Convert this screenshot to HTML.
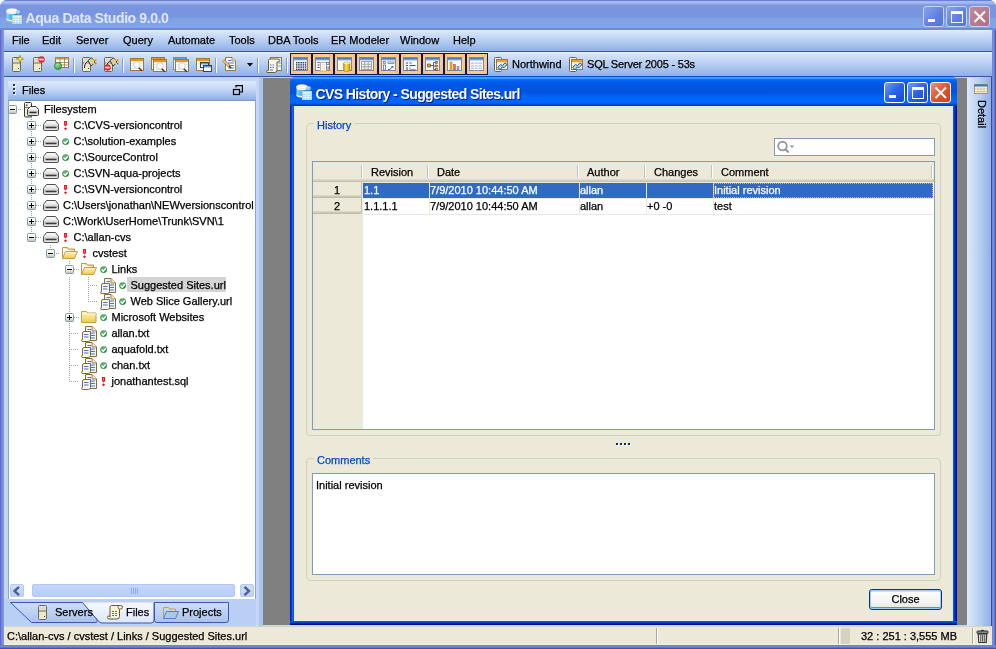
<!DOCTYPE html><html><head><meta charset="utf-8"><style>
*{margin:0;padding:0;box-sizing:border-box}
html,body{width:996px;height:649px;overflow:hidden;background:#fff}
body{font-family:"Liberation Sans",sans-serif;font-size:11px;color:#000;position:relative;-webkit-text-stroke:0.25px currentColor}
.a{position:absolute}
.tx{position:absolute;white-space:nowrap;line-height:16px;font-size:11px}
svg{position:absolute;overflow:visible}
#win{will-change:transform;left:0;top:0;width:996px;height:649px;background:#6e81d9;border-radius:7px 7px 0 0;overflow:hidden}
#title{left:0;top:0;width:996px;height:30px;background:linear-gradient(#6a80d8 0,#6a80d8 1px,#a6baec 1px,#a6baec 3px,#7e98e0 5px,#7a94df 8px,#7a95df 17px,#80a3e8 19px,#80a4e8 27.5px,#7088d8 28px,#7088d8 30px)}
#title .t{-webkit-text-stroke:0;left:25.5px;top:9.5px;font-size:14px;letter-spacing:-0.4px;font-weight:bold;color:#dfe6f8;line-height:16px;white-space:nowrap}
#menu{left:4px;top:30px;width:988px;height:22px;background:linear-gradient(#e6effc 0,#d6e4f9 2px,#b8cef1 50%,#8eb0e6 100%);border-bottom:1px solid #3d52a8}
#menu span{position:absolute;top:2px;line-height:16px}
#tool{left:4px;top:52px;width:988px;height:25px;background:linear-gradient(#e6effc 0,#d6e4f9 2px,#b8cef1 50%,#8eb0e6 100%);border-bottom:1px solid #3d52a8}
#main{left:4px;top:77px;width:988px;height:549px;background:#c4d6f6}
#gray{left:263px;top:78px;width:704px;height:547px;background:#808080}
#status{left:4px;top:626px;width:988px;height:19px;background:#ece9d8;border-top:1px solid #d6d2c6;border-bottom:1px solid #f4f0dc}
#lp{left:8px;top:100px;width:248px;height:500px;background:#fff;border:1px solid #8aa6c8;border-top-color:#7a9ac4}
#lph{left:8px;top:81px;width:248px;height:19px;background:linear-gradient(#dde9fb,#c6d8f6 40%,#8db0e6)}
#detail{left:967px;top:77px;width:24px;height:549px;background:linear-gradient(90deg,#dde9fb,#b9d0f3 50%,#8fb0e6)}
#dlg{left:290px;top:76px;width:667px;height:549px;background:#0a48e0;border-radius:7px 7px 0 0}
#dtitle{left:0;top:0;width:667px;height:30px;border-radius:7px 7px 0 0;background:linear-gradient(#0050e0 0,#0050e0 1px,#40a0ff 1px,#3898ff 3px,#0070ff 3px,#0070ff 4px,#0060f0 5px,#0056e2 9px,#0054e0 15px,#0058e8 18px,#0064fa 21px,#0066ff 27px,#0050e0 28px,#0040c8 29px,#0038c0 30px)}
#dclient{left:4px;top:30px;width:659px;height:515px;background:#ece9d8}
.grp{position:absolute;border:1px solid #d0d0bf;border-radius:4px}
.glab{position:absolute;background:#ece9d8;color:#0046d5;padding:0 3px;line-height:14px;margin-top:1px}
.dots{position:absolute;width:2px;height:2px;background:#0a246a;box-shadow:1px 1px 0 #fff}
</style></head><body><div id="win" class="a"><div id="title" class="a"><div class="t a">Aqua Data Studio 9.0.0</div></div><svg style="left:6px;top:8px" width="17" height="18" viewBox="0 0 17 18">
<defs><linearGradient id="dbg" x1="0" y1="0" x2="1" y2="0"><stop offset="0" stop-color="#8cd4f8"/><stop offset="0.5" stop-color="#3ab0f0"/><stop offset="1" stop-color="#2088d8"/></linearGradient>
<radialGradient id="sph" cx="0.35" cy="0.35" r="0.7"><stop offset="0" stop-color="#d0ecff"/><stop offset="1" stop-color="#3a8ad8"/></radialGradient></defs>
<path d="M0.5 2.5v9c0 1.1 2.5 2 5.5 2s5.5-0.9 5.5-2v-9z" fill="url(#dbg)"/>
<path d="M0.5 10v1.5c0 1.1 2.5 2 5.5 2s5.5-0.9 5.5-2V10c0 1.1-2.5 2-5.5 2s-5.5-0.9-5.5-2z" fill="#f4f0ea"/>
<path d="M0.5 2.5v1.8c0 1.1 2.5 2 5.5 2s5.5-0.9 5.5-2V2.5z" fill="#f8f6f0"/>
<ellipse cx="6" cy="2.5" rx="5.5" ry="2" fill="#fbfaf6" stroke="#e0d8d0" stroke-width="0.5"/>
<circle cx="12.8" cy="4.6" r="2.5" fill="url(#sph)"/>
<rect x="6.5" y="7.5" width="9" height="8" fill="#a8daf6" stroke="#d8ccb4" stroke-width="1"/>
<rect x="7" y="8" width="8" height="1.5" fill="#e8f4fc"/>
<path d="M7 11.5h8M7 13.5h8M9.7 9.5v6M12.3 9.5v6" stroke="#e6f6ff" stroke-width="0.8"/>
</svg><div class="a" style="left:923px;top:6px;width:21px;height:21px;border:1px solid #c9d3f2;border-radius:3px;background:linear-gradient(135deg,#8aa4ec,#5f7ee0 60%,#5675dc)"><div class="a" style="left:4px;top:12px;width:7px;height:3px;background:#fff"></div></div><div class="a" style="left:946px;top:6px;width:21px;height:21px;border:1px solid #c9d3f2;border-radius:3px;background:linear-gradient(135deg,#8aa4ec,#5f7ee0 60%,#5675dc)"><div class="a" style="left:4px;top:4px;width:12px;height:12px;border:1px solid #fff;border-top-width:3px"></div></div><div class="a" style="left:969px;top:6px;width:21px;height:21px;border:1px solid #c9d3f2;border-radius:3px;background:linear-gradient(135deg,#c08a9a,#ad6f82)"><svg style="left:0;top:0" width="19" height="19"><path d="M4.5 4.5L15 15M15 4.5L4.5 15" stroke="#fff" stroke-width="2"/></svg></div><div id="menu" class="a"><span style="left:8px">File</span><span style="left:38px">Edit</span><span style="left:72px">Server</span><span style="left:119px">Query</span><span style="left:164px">Automate</span><span style="left:225px">Tools</span><span style="left:264px">DBA Tools</span><span style="left:327px">ER Modeler</span><span style="left:396px">Window</span><span style="left:449px">Help</span></div><div id="tool" class="a"></div><svg style="left:12px;top:57px" width="9" height="15"><rect x="0.5" y="0.5" width="8" height="14" rx="1" fill="#ece8c8" stroke="#6a6a5a"/><rect x="1.5" y="1.5" width="6" height="3" fill="#d8d8d8"/><path d="M1 6h7" stroke="#6a6a5a"/><rect x="6" y="11" width="1" height="1" fill="#444"/></svg><svg style="left:16px;top:55px" width="8" height="8"><path d="M4 0.3L5 3L7.7 4L5 5L4 7.7L3 5L0.3 4L3 3z" fill="#ffe040" stroke="#a07800" stroke-width="0.6"/></svg><svg style="left:33px;top:57px" width="9" height="15"><rect x="0.5" y="0.5" width="8" height="14" rx="1" fill="#ece8c8" stroke="#6a6a5a"/><rect x="1.5" y="1.5" width="6" height="3" fill="#d8d8d8"/><path d="M1 6h7" stroke="#6a6a5a"/><rect x="6" y="11" width="1" height="1" fill="#444"/></svg><svg style="left:38px;top:56px" width="7.0" height="7.0"><circle cx="3.5" cy="3.5" r="3.2" fill="#e8242c"/><rect x="1.2999999999999998" y="2.7" width="4.4" height="1.6" fill="#fff"/></svg><svg style="left:55px;top:57px" width="14" height="11"><rect x="0.5" y="0.5" width="13" height="10" fill="#fff" stroke="#9a7838"/><rect x="0.5" y="0.5" width="13" height="2" fill="#c89850"/><path d="M0 5.5h14M0 8h14M5 0v11M9.5 0v11" stroke="#9a7838" stroke-width="0.8"/></svg><svg style="left:54px;top:62px" width="9" height="9"><defs><radialGradient id="gcg" cx="0.4" cy="0.3" r="0.7"><stop offset="0" stop-color="#a8e0a0"/><stop offset="1" stop-color="#30a040"/></radialGradient></defs><circle cx="4" cy="4" r="3.6" fill="url(#gcg)" stroke="#2a8a30" stroke-width="0.8"/></svg><div class="a" style="left:73px;top:58px;width:1px;height:15px;background:#7f9bd8;box-shadow:1px 0 0 #fff"></div><svg style="left:82px;top:57px" width="9" height="15"><rect x="0.5" y="0.5" width="8" height="14" rx="1" fill="#ece8c8" stroke="#6a6a5a"/><rect x="1.5" y="1.5" width="6" height="3" fill="#d8d8d8"/><path d="M1 6h7" stroke="#6a6a5a"/><rect x="6" y="11" width="1" height="1" fill="#444"/></svg><svg style="left:82px;top:57px" width="15" height="12"><path d="M2.5 11C2.5 7 3.5 5 6.5 4.5" stroke="#f8f8f0" stroke-width="2.6" fill="none"/><path d="M2.5 11C2.5 7 3.5 5 6.5 4.5" stroke="#202020" stroke-width="1.1" fill="none"/><path d="M6 3.5L9.5 0.8L12.5 4L12.5 6L9 9z" fill="#d8d2a8" stroke="#303030" stroke-width="0.9"/><path d="M10.5 3.2h3.5M10.5 6.5h3.5" stroke="#ffd000" stroke-width="1.3"/><path d="M13 3.2h1.5M13 6.5h1.5" stroke="#e86000" stroke-width="1.3"/></svg><svg style="left:104px;top:57px" width="9" height="15"><rect x="0.5" y="0.5" width="8" height="14" rx="1" fill="#ece8c8" stroke="#6a6a5a"/><rect x="1.5" y="1.5" width="6" height="3" fill="#d8d8d8"/><path d="M1 6h7" stroke="#6a6a5a"/><rect x="6" y="11" width="1" height="1" fill="#444"/></svg><svg style="left:104px;top:57px" width="15" height="12"><path d="M2.5 11C2.5 7 3.5 5 6.5 4.5" stroke="#f8f8f0" stroke-width="2.6" fill="none"/><path d="M2.5 11C2.5 7 3.5 5 6.5 4.5" stroke="#202020" stroke-width="1.1" fill="none"/><path d="M6 3.5L9.5 0.8L12.5 4L12.5 6L9 9z" fill="#d8d2a8" stroke="#303030" stroke-width="0.9"/><path d="M10.5 3.2h3.5M10.5 6.5h3.5" stroke="#ffd000" stroke-width="1.3"/><path d="M13 3.2h1.5M13 6.5h1.5" stroke="#e86000" stroke-width="1.3"/></svg><svg style="left:104px;top:64px" width="7.0" height="7.0"><circle cx="3.5" cy="3.5" r="3.2" fill="#e8242c"/><rect x="1.2999999999999998" y="2.7" width="4.4" height="1.6" fill="#fff"/></svg><div class="a" style="left:122px;top:58px;width:1px;height:15px;background:#7f9bd8;box-shadow:1px 0 0 #fff"></div><svg style="left:130px;top:58px" width="14" height="13"><rect x="0.5" y="0.5" width="13" height="12" fill="#fff" stroke="#9a7838"/><rect x="1" y="1" width="12" height="2.2" fill="#f09020"/><path d="M1 5.5h12M1 8h12M1 10.5h12" stroke="#d8f0f8" stroke-width="1.2"/><path d="M4 3v9" stroke="#e0e0d0" stroke-width="0.8"/></svg><svg style="left:133px;top:61px" width="10" height="10"><circle cx="4" cy="4" r="3.3" fill="#f8f8f8" stroke="#c8c8c0" stroke-width="0.8"/><path d="M5.8 6.8l3 3" stroke="#702818" stroke-width="1.5"/></svg><svg style="left:151px;top:57px" width="14" height="13"><rect x="0.5" y="0.5" width="13" height="12" fill="#fff" stroke="#9a7838"/><rect x="1" y="1" width="12" height="2.2" fill="#f09020"/><path d="M1 5.5h12M1 8h12M1 10.5h12" stroke="#d8f0f8" stroke-width="1.2"/><path d="M4 3v9" stroke="#e0e0d0" stroke-width="0.8"/></svg><svg style="left:153px;top:59px" width="14" height="13"><rect x="0.5" y="0.5" width="13" height="12" fill="#fff" stroke="#9a7838"/><rect x="1" y="1" width="12" height="2.2" fill="#f09020"/><path d="M1 5.5h12M1 8h12M1 10.5h12" stroke="#d8f0f8" stroke-width="1.2"/><path d="M4 3v9" stroke="#e0e0d0" stroke-width="0.8"/></svg><svg style="left:156px;top:62px" width="10" height="10"><circle cx="4" cy="4" r="3.3" fill="#f8f8f8" stroke="#c8c8c0" stroke-width="0.8"/><path d="M5.8 6.8l3 3" stroke="#702818" stroke-width="1.5"/></svg><svg style="left:173px;top:57px" width="14" height="13"><rect x="0.5" y="0.5" width="13" height="12" fill="#fff" stroke="#7890a8"/><rect x="1" y="1" width="12" height="2.2" fill="#58a0e0"/><path d="M1 5.5h12M1 8h12M1 10.5h12" stroke="#d8f0f8" stroke-width="1.2"/><path d="M4 3v9" stroke="#e0e0d0" stroke-width="0.8"/></svg><svg style="left:175px;top:59px" width="14" height="13"><rect x="0.5" y="0.5" width="13" height="12" fill="#fff" stroke="#9a7838"/><rect x="1" y="1" width="12" height="2.2" fill="#f09020"/><path d="M1 5.5h12M1 8h12M1 10.5h12" stroke="#d8f0f8" stroke-width="1.2"/><path d="M4 3v9" stroke="#e0e0d0" stroke-width="0.8"/></svg><svg style="left:178px;top:62px" width="10" height="10"><circle cx="4" cy="4" r="3.3" fill="#f8f8f8" stroke="#c8c8c0" stroke-width="0.8"/><path d="M5.8 6.8l3 3" stroke="#702818" stroke-width="1.5"/></svg><svg style="left:196px;top:58px" width="14" height="13"><rect x="0.5" y="0.5" width="13" height="12" fill="#fff" stroke="#9a7838"/><rect x="1" y="1" width="12" height="2.2" fill="#f09020"/><path d="M1 5.5h12M1 8h12M1 10.5h12" stroke="#d8f0f8" stroke-width="1.2"/><path d="M4 3v9" stroke="#e0e0d0" stroke-width="0.8"/></svg><svg style="left:200px;top:62px" width="12" height="10"><rect x="0.5" y="0.5" width="8" height="5" fill="#fff" stroke="#404040"/><rect x="1" y="1" width="7" height="1.5" fill="#58a0e0"/><rect x="3.5" y="3.5" width="8" height="6" fill="#fff" stroke="#404040"/><rect x="4" y="4" width="7" height="1.5" fill="#58a0e0"/></svg><div class="a" style="left:215px;top:58px;width:1px;height:15px;background:#7f9bd8;box-shadow:1px 0 0 #fff"></div><svg style="left:222px;top:57px" width="16" height="15"><path d="M3.5 0.5H10L13.5 4V13.5H3.5z" fill="#fff" stroke="#9a7838"/><path d="M10 0.5V4H13.5" fill="#f4e4b8" stroke="#9a7838" stroke-width="0.8"/><path d="M6 3.5h3.5M6 6h6M6 8.5h6M6 11h6" stroke="#4a78c8" stroke-width="1"/><path d="M1 3L7 9" stroke="#9a7838" stroke-width="3"/><path d="M1 3L7 9" stroke="#f0d090" stroke-width="1.6"/><path d="M7 9L9 11" stroke="#303060" stroke-width="1.6"/></svg><svg style="left:247px;top:63px" width="6" height="4"><path d="M0 0h6L3 3.5z" fill="#000"/></svg><div class="a" style="left:257px;top:58px;width:1px;height:15px;background:#7f9bd8;box-shadow:1px 0 0 #fff"></div><svg style="left:266px;top:57px" width="16" height="16"><rect x="4.5" y="0.5" width="11" height="13" fill="#eef6fc" stroke="#8a7a50"/><path d="M12.5 3h2M12.5 6h2M12.5 9h2" stroke="#5080c0"/><path d="M2.5 3.5Q2.5 2 4 2H12Q13.5 2 13.5 3.5Q13.5 5 12 5H11V13Q11 15.5 8.5 15.5H2Q0.5 15.5 0.5 14.5Q0.5 13.5 1.5 13.5H2.5z" fill="#f8f6ea" stroke="#6a5a3a"/><path d="M4 8h1.5M6.5 8h1.5M4 10.5h1.5M6.5 10.5h1.5M4 13h3" stroke="#4a70c0" stroke-width="1.1"/></svg><div class="a" style="left:286px;top:58px;width:1px;height:15px;background:#7f9bd8;box-shadow:1px 0 0 #fff"></div><div class="a" style="left:290px;top:53px;width:198px;height:22px;background:#0a1a6a"></div><svg width="0" height="0" style="left:0;top:0"><defs><linearGradient id="whd" x1="0" y1="0" x2="0" y2="1"><stop offset="0" stop-color="#3a6ec0"/><stop offset="1" stop-color="#9cbce6"/></linearGradient><linearGradient id="gold" x1="0" y1="0" x2="1" y2="0"><stop offset="0" stop-color="#c89000"/><stop offset="0.4" stop-color="#ffe060"/><stop offset="1" stop-color="#d09800"/></linearGradient></defs></svg><div class="a" style="left:291px;top:54px;width:20px;height:20px;background:radial-gradient(ellipse at 50% 45%,#ffdba6 10%,#fecb86 60%,#fbbd6c 100%)"></div><svg style="left:293px;top:57px" width="15" height="14"><rect x="0.5" y="0.5" width="14" height="13" fill="#f6f9fd" stroke="#7888a0"/><rect x="1" y="1" width="13" height="2.5" fill="url(#whd)"/></svg><div class="a" style="left:313px;top:54px;width:20px;height:20px;background:radial-gradient(ellipse at 50% 45%,#ffdba6 10%,#fecb86 60%,#fbbd6c 100%)"></div><svg style="left:315px;top:57px" width="15" height="14"><rect x="0.5" y="0.5" width="14" height="13" fill="#f6f9fd" stroke="#7888a0"/><rect x="1" y="1" width="13" height="2.5" fill="url(#whd)"/></svg><div class="a" style="left:335px;top:54px;width:20px;height:20px;background:radial-gradient(ellipse at 50% 45%,#ffdba6 10%,#fecb86 60%,#fbbd6c 100%)"></div><svg style="left:337px;top:57px" width="15" height="14"><rect x="0.5" y="0.5" width="14" height="13" fill="#f6f9fd" stroke="#7888a0"/><rect x="1" y="1" width="13" height="2.5" fill="url(#whd)"/></svg><div class="a" style="left:357px;top:54px;width:20px;height:20px;background:radial-gradient(ellipse at 50% 45%,#ffdba6 10%,#fecb86 60%,#fbbd6c 100%)"></div><svg style="left:359px;top:57px" width="15" height="14"><rect x="0.5" y="0.5" width="14" height="13" fill="#f6f9fd" stroke="#7888a0"/><rect x="1" y="1" width="13" height="2.5" fill="url(#whd)"/></svg><div class="a" style="left:379px;top:54px;width:20px;height:20px;background:radial-gradient(ellipse at 50% 45%,#ffdba6 10%,#fecb86 60%,#fbbd6c 100%)"></div><svg style="left:381px;top:57px" width="15" height="14"><rect x="0.5" y="0.5" width="14" height="13" fill="#f6f9fd" stroke="#7888a0"/><rect x="1" y="1" width="13" height="2.5" fill="url(#whd)"/></svg><div class="a" style="left:401px;top:54px;width:20px;height:20px;background:radial-gradient(ellipse at 50% 45%,#ffdba6 10%,#fecb86 60%,#fbbd6c 100%)"></div><svg style="left:403px;top:57px" width="15" height="14"><rect x="0.5" y="0.5" width="14" height="13" fill="#f6f9fd" stroke="#7888a0"/><rect x="1" y="1" width="13" height="2.5" fill="url(#whd)"/></svg><div class="a" style="left:423px;top:54px;width:20px;height:20px;background:radial-gradient(ellipse at 50% 45%,#ffdba6 10%,#fecb86 60%,#fbbd6c 100%)"></div><svg style="left:425px;top:57px" width="15" height="14"><rect x="0.5" y="0.5" width="14" height="13" fill="#f6f9fd" stroke="#7888a0"/><rect x="1" y="1" width="13" height="2.5" fill="url(#whd)"/></svg><div class="a" style="left:445px;top:54px;width:20px;height:20px;background:radial-gradient(ellipse at 50% 45%,#ffdba6 10%,#fecb86 60%,#fbbd6c 100%)"></div><svg style="left:447px;top:57px" width="15" height="14"><rect x="0.5" y="0.5" width="14" height="13" fill="#f6f9fd" stroke="#7888a0"/><rect x="1" y="1" width="13" height="2.5" fill="url(#whd)"/></svg><div class="a" style="left:467px;top:54px;width:20px;height:20px;background:radial-gradient(ellipse at 50% 45%,#ffdba6 10%,#fecb86 60%,#fbbd6c 100%)"></div><svg style="left:469px;top:57px" width="15" height="14"><rect x="0.5" y="0.5" width="14" height="13" fill="#f6f9fd" stroke="#7888a0"/><rect x="1" y="1" width="13" height="2.5" fill="url(#whd)"/></svg><svg style="left:293px;top:57px" width="15" height="16"><rect x="3.0" y="5.0" width="1.5" height="1.4" fill="#303850"/><rect x="5.2" y="5.0" width="1.5" height="1.4" fill="#303850"/><rect x="7.4" y="5.0" width="1.5" height="1.4" fill="#303850"/><rect x="9.6" y="5.0" width="1.5" height="1.4" fill="#303850"/><rect x="11.8" y="5.0" width="1.5" height="1.4" fill="#303850"/><rect x="3.0" y="7.2" width="1.5" height="1.4" fill="#303850"/><rect x="5.2" y="7.2" width="1.5" height="1.4" fill="#303850"/><rect x="7.4" y="7.2" width="1.5" height="1.4" fill="#303850"/><rect x="9.6" y="7.2" width="1.5" height="1.4" fill="#303850"/><rect x="11.8" y="7.2" width="1.5" height="1.4" fill="#303850"/><rect x="3.0" y="9.4" width="1.5" height="1.4" fill="#303850"/><rect x="5.2" y="9.4" width="1.5" height="1.4" fill="#303850"/><rect x="7.4" y="9.4" width="1.5" height="1.4" fill="#303850"/><rect x="9.6" y="9.4" width="1.5" height="1.4" fill="#303850"/><rect x="11.8" y="9.4" width="1.5" height="1.4" fill="#303850"/><rect x="3.0" y="11.6" width="1.5" height="1.4" fill="#303850"/><rect x="5.2" y="11.6" width="1.5" height="1.4" fill="#303850"/><rect x="7.4" y="11.6" width="1.5" height="1.4" fill="#303850"/><rect x="9.6" y="11.6" width="1.5" height="1.4" fill="#303850"/><rect x="11.8" y="11.6" width="1.5" height="1.4" fill="#303850"/></svg><svg style="left:315px;top:57px" width="15" height="16"><path d="M2.5 5.5h2M2.5 8h2M2.5 10.5h2" stroke="#404860" stroke-width="1"/><rect x="5.5" y="5.5" width="6" height="8.5" fill="#fbfbf4" stroke="#c8b080"/><path d="M7 7.5h3M7 9.5h3M7 11.5h3" stroke="#d8d8e8" stroke-width="0.8"/><rect x="11.5" y="5.5" width="2.5" height="2" fill="#fff" stroke="#506080" stroke-width="0.7"/><rect x="11.5" y="10" width="2.5" height="2" fill="#fff" stroke="#506080" stroke-width="0.7"/></svg><svg style="left:337px;top:57px" width="15" height="16"><path d="M6.5 6.5Q6.5 5 9.8 5Q13 5 13 6.5V13Q13 14.5 9.8 14.5Q6.5 14.5 6.5 13z" fill="url(#gold)" stroke="#b88000" stroke-width="0.6"/><ellipse cx="9.8" cy="6.3" rx="3" ry="1" fill="#fff0a0"/></svg><svg style="left:359px;top:57px" width="15" height="16"><rect x="2.5" y="4.5" width="10" height="8" fill="#fff" stroke="#a0a0a0"/><path d="M2.5 7.2h10M2.5 9.9h10M5.8 4.5v8M9.2 4.5v8" stroke="#a8a8a8" stroke-width="1.1"/></svg><svg style="left:381px;top:57px" width="15" height="16"><rect x="2.5" y="4.5" width="2" height="2" fill="none" stroke="#607090" stroke-width="0.7"/><rect x="2.5" y="8" width="2" height="5" fill="none" stroke="#607090" stroke-width="0.8"/><rect x="7" y="5" width="6" height="1.6" fill="none" stroke="#607090" stroke-width="0.7"/><path d="M7 12.5L9 12.5L11.5 9.5M10.5 9.5h1.5v1.5" stroke="#506080" stroke-width="1" fill="none"/></svg><svg style="left:403px;top:57px" width="15" height="16"><path d="M3 6h2M6.5 6h2M3 8.5h2M6.5 8.5h6M3 11h2M6.5 11h1M3 13h2M6.5 13h6" stroke="#404860" stroke-width="1"/></svg><svg style="left:425px;top:57px" width="15" height="16"><rect x="2.5" y="7" width="3" height="3" fill="#f0a010" stroke="#404040" stroke-width="0.6"/><rect x="10.5" y="4.5" width="2.2" height="2" fill="#f0a010" stroke="#404040" stroke-width="0.5"/><rect x="10.5" y="8" width="2.2" height="2" fill="#f0a010" stroke="#404040" stroke-width="0.5"/><rect x="10.5" y="11.5" width="2.2" height="2" fill="#f0a010" stroke="#404040" stroke-width="0.5"/><path d="M5.5 8.5h3M8.5 5.5v7M8.5 5.5h2M8.5 9h2M8.5 12.5h2" stroke="#404040" stroke-width="0.8" fill="none"/></svg><svg style="left:447px;top:57px" width="15" height="16"><rect x="3" y="5" width="2" height="8" fill="#f0b020" stroke="#c08000" stroke-width="0.5"/><rect x="6.5" y="7.5" width="2" height="5.5" fill="#e86868" stroke="#c04040" stroke-width="0.5"/><rect x="10" y="9.5" width="2" height="3.5" fill="#90b0d8" stroke="#6080a0" stroke-width="0.5"/></svg><svg style="left:469px;top:57px" width="15" height="16"><path d="M2 6.2h11M2 8.7h11M2 11.2h11" stroke="#b8cce8" stroke-width="1.6"/><path d="M5.5 4v9.5M9 4v9.5" stroke="#fff" stroke-width="0.8"/></svg><svg style="left:494px;top:57px" width="15" height="15"><rect x="0.5" y="0.5" width="7" height="14" rx="1" fill="#fbf8e0" stroke="#606060"/><path d="M1.5 2v11" stroke="#fff" stroke-width="1"/><rect x="2.5" y="2.5" width="11" height="10" fill="#dcf4ff" stroke="#a07818"/><rect x="3" y="3" width="10" height="2.2" fill="#f0a020"/><path d="M3.8 10.2L6.5 7.6L8.5 8.6L11 5.8L13 7.6L10.2 10.6L8.2 10L6.2 13z" fill="#b8e0c8" stroke="#1a5ab8" stroke-width="1"/></svg><div class="tx" style="left:512px;top:56px">Northwind</div><svg style="left:569px;top:57px" width="15" height="15"><rect x="0.5" y="0.5" width="7" height="14" rx="1" fill="#fbf8e0" stroke="#606060"/><path d="M1.5 2v11" stroke="#fff" stroke-width="1"/><rect x="2.5" y="2.5" width="11" height="10" fill="#dcf4ff" stroke="#a07818"/><rect x="3" y="3" width="10" height="2.2" fill="#f0a020"/><path d="M3.8 10.2L6.5 7.6L8.5 8.6L11 5.8L13 7.6L10.2 10.6L8.2 10L6.2 13z" fill="#b8e0c8" stroke="#1a5ab8" stroke-width="1"/></svg><div class="tx" style="left:587px;top:56px;letter-spacing:-0.2px">SQL Server 2005 - 53s</div><div id="main" class="a"></div><div id="gray" class="a"></div><div id="lp" class="a"></div><div id="lph" class="a"></div><div class="a" style="left:13px;top:84px;width:2px;height:2px;background:#203080;box-shadow:0 4px 0 #203080,0 8px 0 #203080,1px 1px 0 #fff,1px 5px 0 #fff,1px 9px 0 #fff"></div><div class="tx" style="left:22px;top:82px;font-size:11px">Files</div><svg style="left:233px;top:85px" width="11" height="11"><rect x="0.5" y="4.5" width="6" height="5" fill="none" stroke="#000" stroke-width="1.2"/><path d="M3 2.5V0.6h6.4V7H7" fill="none" stroke="#000" stroke-width="1.2"/></svg><svg style="left:0;top:0" width="260" height="400"><path d="M18 109.5H22" stroke="#a0a0a0" stroke-dasharray="1,1"/><path d="M36 125.5H41" stroke="#a0a0a0" stroke-dasharray="1,1"/><path d="M36 141.5H41" stroke="#a0a0a0" stroke-dasharray="1,1"/><path d="M36 157.5H41" stroke="#a0a0a0" stroke-dasharray="1,1"/><path d="M36 173.5H41" stroke="#a0a0a0" stroke-dasharray="1,1"/><path d="M36 189.5H41" stroke="#a0a0a0" stroke-dasharray="1,1"/><path d="M36 205.5H41" stroke="#a0a0a0" stroke-dasharray="1,1"/><path d="M36 221.5H41" stroke="#a0a0a0" stroke-dasharray="1,1"/><path d="M36 237.5H41" stroke="#a0a0a0" stroke-dasharray="1,1"/><path d="M56 253.5H60" stroke="#a0a0a0" stroke-dasharray="1,1"/><path d="M74 269.5H79" stroke="#a0a0a0" stroke-dasharray="1,1"/><path d="M88 285.5H98" stroke="#a0a0a0" stroke-dasharray="1,1"/><path d="M88 301.5H98" stroke="#a0a0a0" stroke-dasharray="1,1"/><path d="M74 317.5H79" stroke="#a0a0a0" stroke-dasharray="1,1"/><path d="M69 333.5H79" stroke="#a0a0a0" stroke-dasharray="1,1"/><path d="M69 349.5H79" stroke="#a0a0a0" stroke-dasharray="1,1"/><path d="M69 365.5H79" stroke="#a0a0a0" stroke-dasharray="1,1"/><path d="M69 381.5H79" stroke="#a0a0a0" stroke-dasharray="1,1"/><path d="M31.5 117V237" stroke="#a0a0a0" stroke-dasharray="1,1"/><path d="M50.5 245V253" stroke="#a0a0a0" stroke-dasharray="1,1"/><path d="M69.5 261V269" stroke="#a0a0a0" stroke-dasharray="1,1"/><path d="M88.5 277V301" stroke="#a0a0a0" stroke-dasharray="1,1"/><path d="M69.5 277V381" stroke="#a0a0a0" stroke-dasharray="1,1"/></svg><svg style="left:8px;top:105px" width="9" height="9"><defs><linearGradient id="eg" x1="0" y1="0" x2="0" y2="1"><stop offset="0" stop-color="#fff"/><stop offset="0.5" stop-color="#f4f2ea"/><stop offset="1" stop-color="#c4bca0"/></linearGradient></defs><rect x="0.5" y="0.5" width="8" height="8" rx="1" fill="url(#eg)" stroke="#7f9db9"/><path d="M2 4.5h5" stroke="#000"/></svg><svg style="left:24px;top:101px" width="16" height="17"><rect x="0.5" y="1.5" width="7" height="14.5" rx="1" fill="#f2eec8" stroke="#383838"/><rect x="1.5" y="2.5" width="5" height="3.5" fill="#fbfbe8"/><rect x="2" y="3.5" width="1.5" height="1.5" fill="#404040"/><path d="M1 6.5H7" stroke="#505050" stroke-width="0.8"/><path d="M6.5 5.5H12L14.5 8.5V13.5Q14.5 14.5 13.5 14.5H4.5Q3.5 14.5 3.5 13.5V8.5z" fill="url(#dg)" stroke="#383838"/><path d="M5.5 11.5H12.5" stroke="#303030" stroke-width="1.4"/></svg><div class="tx" style="left:44px;top:101px">Filesystem</div><svg style="left:27px;top:121px" width="9" height="9"><defs><linearGradient id="eg" x1="0" y1="0" x2="0" y2="1"><stop offset="0" stop-color="#fff"/><stop offset="0.5" stop-color="#f4f2ea"/><stop offset="1" stop-color="#c4bca0"/></linearGradient></defs><rect x="0.5" y="0.5" width="8" height="8" rx="1" fill="url(#eg)" stroke="#7f9db9"/><path d="M2 4.5h5" stroke="#000"/><path d="M4.5 2v5" stroke="#000"/></svg><svg style="left:43px;top:120px" width="16" height="12"><defs><linearGradient id="dg" x1="0" y1="0" x2="0" y2="1"><stop offset="0" stop-color="#fdfdfd"/><stop offset="0.35" stop-color="#ececec"/><stop offset="0.6" stop-color="#c8c8c8"/><stop offset="1" stop-color="#f4f4f4"/></linearGradient></defs><path d="M3.5 0.5H12.5L15.5 4.5V9Q15.5 10.5 14 10.5H2Q0.5 10.5 0.5 9V4.5z" fill="url(#dg)" stroke="#505050"/><path d="M2.5 7.5H13.5" stroke="#3a3a3a" stroke-width="1.6"/></svg><svg style="left:64px;top:121px" width="4" height="10"><path d="M0 0H3V4L1.5 5.5L0 4z" fill="#ff1020"/><path d="M1.5 1V3.5" stroke="#ff9090" stroke-width="0.8"/><path d="M1.5 6.3L3 7.8L1.5 9.3L0 7.8z" fill="#f01020"/></svg><div class="tx" style="left:73.5px;top:117px">C:\CVS-versioncontrol</div><svg style="left:27px;top:137px" width="9" height="9"><defs><linearGradient id="eg" x1="0" y1="0" x2="0" y2="1"><stop offset="0" stop-color="#fff"/><stop offset="0.5" stop-color="#f4f2ea"/><stop offset="1" stop-color="#c4bca0"/></linearGradient></defs><rect x="0.5" y="0.5" width="8" height="8" rx="1" fill="url(#eg)" stroke="#7f9db9"/><path d="M2 4.5h5" stroke="#000"/><path d="M4.5 2v5" stroke="#000"/></svg><svg style="left:43px;top:136px" width="16" height="12"><defs><linearGradient id="dg" x1="0" y1="0" x2="0" y2="1"><stop offset="0" stop-color="#fdfdfd"/><stop offset="0.35" stop-color="#ececec"/><stop offset="0.6" stop-color="#c8c8c8"/><stop offset="1" stop-color="#f4f4f4"/></linearGradient></defs><path d="M3.5 0.5H12.5L15.5 4.5V9Q15.5 10.5 14 10.5H2Q0.5 10.5 0.5 9V4.5z" fill="url(#dg)" stroke="#505050"/><path d="M2.5 7.5H13.5" stroke="#3a3a3a" stroke-width="1.6"/></svg><svg style="left:62px;top:138px" width="8" height="8"><defs><radialGradient id="okg" cx="0.4" cy="0.3" r="0.8"><stop offset="0" stop-color="#5cc070"/><stop offset="1" stop-color="#177a2c"/></radialGradient></defs><circle cx="3.6" cy="3.6" r="3.4" fill="url(#okg)"/><path d="M1.6 3.6l1.6 1.7L5.8 2.2" stroke="#fff" stroke-width="1.5" fill="none"/></svg><div class="tx" style="left:73.5px;top:133px">C:\solution-examples</div><svg style="left:27px;top:153px" width="9" height="9"><defs><linearGradient id="eg" x1="0" y1="0" x2="0" y2="1"><stop offset="0" stop-color="#fff"/><stop offset="0.5" stop-color="#f4f2ea"/><stop offset="1" stop-color="#c4bca0"/></linearGradient></defs><rect x="0.5" y="0.5" width="8" height="8" rx="1" fill="url(#eg)" stroke="#7f9db9"/><path d="M2 4.5h5" stroke="#000"/><path d="M4.5 2v5" stroke="#000"/></svg><svg style="left:43px;top:152px" width="16" height="12"><defs><linearGradient id="dg" x1="0" y1="0" x2="0" y2="1"><stop offset="0" stop-color="#fdfdfd"/><stop offset="0.35" stop-color="#ececec"/><stop offset="0.6" stop-color="#c8c8c8"/><stop offset="1" stop-color="#f4f4f4"/></linearGradient></defs><path d="M3.5 0.5H12.5L15.5 4.5V9Q15.5 10.5 14 10.5H2Q0.5 10.5 0.5 9V4.5z" fill="url(#dg)" stroke="#505050"/><path d="M2.5 7.5H13.5" stroke="#3a3a3a" stroke-width="1.6"/></svg><svg style="left:62px;top:154px" width="8" height="8"><defs><radialGradient id="okg" cx="0.4" cy="0.3" r="0.8"><stop offset="0" stop-color="#5cc070"/><stop offset="1" stop-color="#177a2c"/></radialGradient></defs><circle cx="3.6" cy="3.6" r="3.4" fill="url(#okg)"/><path d="M1.6 3.6l1.6 1.7L5.8 2.2" stroke="#fff" stroke-width="1.5" fill="none"/></svg><div class="tx" style="left:73.5px;top:149px">C:\SourceControl</div><svg style="left:27px;top:169px" width="9" height="9"><defs><linearGradient id="eg" x1="0" y1="0" x2="0" y2="1"><stop offset="0" stop-color="#fff"/><stop offset="0.5" stop-color="#f4f2ea"/><stop offset="1" stop-color="#c4bca0"/></linearGradient></defs><rect x="0.5" y="0.5" width="8" height="8" rx="1" fill="url(#eg)" stroke="#7f9db9"/><path d="M2 4.5h5" stroke="#000"/><path d="M4.5 2v5" stroke="#000"/></svg><svg style="left:43px;top:168px" width="16" height="12"><defs><linearGradient id="dg" x1="0" y1="0" x2="0" y2="1"><stop offset="0" stop-color="#fdfdfd"/><stop offset="0.35" stop-color="#ececec"/><stop offset="0.6" stop-color="#c8c8c8"/><stop offset="1" stop-color="#f4f4f4"/></linearGradient></defs><path d="M3.5 0.5H12.5L15.5 4.5V9Q15.5 10.5 14 10.5H2Q0.5 10.5 0.5 9V4.5z" fill="url(#dg)" stroke="#505050"/><path d="M2.5 7.5H13.5" stroke="#3a3a3a" stroke-width="1.6"/></svg><svg style="left:62px;top:170px" width="8" height="8"><defs><radialGradient id="okg" cx="0.4" cy="0.3" r="0.8"><stop offset="0" stop-color="#5cc070"/><stop offset="1" stop-color="#177a2c"/></radialGradient></defs><circle cx="3.6" cy="3.6" r="3.4" fill="url(#okg)"/><path d="M1.6 3.6l1.6 1.7L5.8 2.2" stroke="#fff" stroke-width="1.5" fill="none"/></svg><div class="tx" style="left:73.5px;top:165px">C:\SVN-aqua-projects</div><svg style="left:27px;top:185px" width="9" height="9"><defs><linearGradient id="eg" x1="0" y1="0" x2="0" y2="1"><stop offset="0" stop-color="#fff"/><stop offset="0.5" stop-color="#f4f2ea"/><stop offset="1" stop-color="#c4bca0"/></linearGradient></defs><rect x="0.5" y="0.5" width="8" height="8" rx="1" fill="url(#eg)" stroke="#7f9db9"/><path d="M2 4.5h5" stroke="#000"/><path d="M4.5 2v5" stroke="#000"/></svg><svg style="left:43px;top:184px" width="16" height="12"><defs><linearGradient id="dg" x1="0" y1="0" x2="0" y2="1"><stop offset="0" stop-color="#fdfdfd"/><stop offset="0.35" stop-color="#ececec"/><stop offset="0.6" stop-color="#c8c8c8"/><stop offset="1" stop-color="#f4f4f4"/></linearGradient></defs><path d="M3.5 0.5H12.5L15.5 4.5V9Q15.5 10.5 14 10.5H2Q0.5 10.5 0.5 9V4.5z" fill="url(#dg)" stroke="#505050"/><path d="M2.5 7.5H13.5" stroke="#3a3a3a" stroke-width="1.6"/></svg><svg style="left:64px;top:185px" width="4" height="10"><path d="M0 0H3V4L1.5 5.5L0 4z" fill="#ff1020"/><path d="M1.5 1V3.5" stroke="#ff9090" stroke-width="0.8"/><path d="M1.5 6.3L3 7.8L1.5 9.3L0 7.8z" fill="#f01020"/></svg><div class="tx" style="left:73.5px;top:181px">C:\SVN-versioncontrol</div><svg style="left:27px;top:201px" width="9" height="9"><defs><linearGradient id="eg" x1="0" y1="0" x2="0" y2="1"><stop offset="0" stop-color="#fff"/><stop offset="0.5" stop-color="#f4f2ea"/><stop offset="1" stop-color="#c4bca0"/></linearGradient></defs><rect x="0.5" y="0.5" width="8" height="8" rx="1" fill="url(#eg)" stroke="#7f9db9"/><path d="M2 4.5h5" stroke="#000"/><path d="M4.5 2v5" stroke="#000"/></svg><svg style="left:43px;top:200px" width="16" height="12"><defs><linearGradient id="dg" x1="0" y1="0" x2="0" y2="1"><stop offset="0" stop-color="#fdfdfd"/><stop offset="0.35" stop-color="#ececec"/><stop offset="0.6" stop-color="#c8c8c8"/><stop offset="1" stop-color="#f4f4f4"/></linearGradient></defs><path d="M3.5 0.5H12.5L15.5 4.5V9Q15.5 10.5 14 10.5H2Q0.5 10.5 0.5 9V4.5z" fill="url(#dg)" stroke="#505050"/><path d="M2.5 7.5H13.5" stroke="#3a3a3a" stroke-width="1.6"/></svg><div class="tx" style="left:63px;top:197px">C:\Users\jonathan\NEWversionscontrol</div><svg style="left:27px;top:217px" width="9" height="9"><defs><linearGradient id="eg" x1="0" y1="0" x2="0" y2="1"><stop offset="0" stop-color="#fff"/><stop offset="0.5" stop-color="#f4f2ea"/><stop offset="1" stop-color="#c4bca0"/></linearGradient></defs><rect x="0.5" y="0.5" width="8" height="8" rx="1" fill="url(#eg)" stroke="#7f9db9"/><path d="M2 4.5h5" stroke="#000"/><path d="M4.5 2v5" stroke="#000"/></svg><svg style="left:43px;top:216px" width="16" height="12"><defs><linearGradient id="dg" x1="0" y1="0" x2="0" y2="1"><stop offset="0" stop-color="#fdfdfd"/><stop offset="0.35" stop-color="#ececec"/><stop offset="0.6" stop-color="#c8c8c8"/><stop offset="1" stop-color="#f4f4f4"/></linearGradient></defs><path d="M3.5 0.5H12.5L15.5 4.5V9Q15.5 10.5 14 10.5H2Q0.5 10.5 0.5 9V4.5z" fill="url(#dg)" stroke="#505050"/><path d="M2.5 7.5H13.5" stroke="#3a3a3a" stroke-width="1.6"/></svg><div class="tx" style="left:63px;top:213px">C:\Work\UserHome\Trunk\SVN\1</div><svg style="left:27px;top:233px" width="9" height="9"><defs><linearGradient id="eg" x1="0" y1="0" x2="0" y2="1"><stop offset="0" stop-color="#fff"/><stop offset="0.5" stop-color="#f4f2ea"/><stop offset="1" stop-color="#c4bca0"/></linearGradient></defs><rect x="0.5" y="0.5" width="8" height="8" rx="1" fill="url(#eg)" stroke="#7f9db9"/><path d="M2 4.5h5" stroke="#000"/></svg><svg style="left:43px;top:232px" width="16" height="12"><defs><linearGradient id="dg" x1="0" y1="0" x2="0" y2="1"><stop offset="0" stop-color="#fdfdfd"/><stop offset="0.35" stop-color="#ececec"/><stop offset="0.6" stop-color="#c8c8c8"/><stop offset="1" stop-color="#f4f4f4"/></linearGradient></defs><path d="M3.5 0.5H12.5L15.5 4.5V9Q15.5 10.5 14 10.5H2Q0.5 10.5 0.5 9V4.5z" fill="url(#dg)" stroke="#505050"/><path d="M2.5 7.5H13.5" stroke="#3a3a3a" stroke-width="1.6"/></svg><svg style="left:64px;top:233px" width="4" height="10"><path d="M0 0H3V4L1.5 5.5L0 4z" fill="#ff1020"/><path d="M1.5 1V3.5" stroke="#ff9090" stroke-width="0.8"/><path d="M1.5 6.3L3 7.8L1.5 9.3L0 7.8z" fill="#f01020"/></svg><div class="tx" style="left:73.5px;top:229px">C:\allan-cvs</div><svg style="left:46px;top:249px" width="9" height="9"><defs><linearGradient id="eg" x1="0" y1="0" x2="0" y2="1"><stop offset="0" stop-color="#fff"/><stop offset="0.5" stop-color="#f4f2ea"/><stop offset="1" stop-color="#c4bca0"/></linearGradient></defs><rect x="0.5" y="0.5" width="8" height="8" rx="1" fill="url(#eg)" stroke="#7f9db9"/><path d="M2 4.5h5" stroke="#000"/></svg><svg style="left:62px;top:246px" width="16" height="13"><defs><linearGradient id="fof" x1="0" y1="0" x2="0" y2="1"><stop offset="0" stop-color="#fff6c0"/><stop offset="1" stop-color="#f0c840"/></linearGradient></defs><path d="M0.5 1.5h5l1 1.5h6v3" fill="#f4dc80" stroke="#b89848"/><path d="M0.5 1.5v11" fill="none" stroke="#b89848"/><path d="M0.5 12.5l3-7h12l-3 7z" fill="url(#fof)" stroke="#c0a048"/></svg><svg style="left:83px;top:249px" width="4" height="10"><path d="M0 0H3V4L1.5 5.5L0 4z" fill="#ff1020"/><path d="M1.5 1V3.5" stroke="#ff9090" stroke-width="0.8"/><path d="M1.5 6.3L3 7.8L1.5 9.3L0 7.8z" fill="#f01020"/></svg><div class="tx" style="left:92.5px;top:245px">cvstest</div><svg style="left:65px;top:265px" width="9" height="9"><defs><linearGradient id="eg" x1="0" y1="0" x2="0" y2="1"><stop offset="0" stop-color="#fff"/><stop offset="0.5" stop-color="#f4f2ea"/><stop offset="1" stop-color="#c4bca0"/></linearGradient></defs><rect x="0.5" y="0.5" width="8" height="8" rx="1" fill="url(#eg)" stroke="#7f9db9"/><path d="M2 4.5h5" stroke="#000"/></svg><svg style="left:81px;top:262px" width="16" height="13"><defs><linearGradient id="fof" x1="0" y1="0" x2="0" y2="1"><stop offset="0" stop-color="#fff6c0"/><stop offset="1" stop-color="#f0c840"/></linearGradient></defs><path d="M0.5 1.5h5l1 1.5h6v3" fill="#f4dc80" stroke="#b89848"/><path d="M0.5 1.5v11" fill="none" stroke="#b89848"/><path d="M0.5 12.5l3-7h12l-3 7z" fill="url(#fof)" stroke="#c0a048"/></svg><svg style="left:100px;top:266px" width="8" height="8"><defs><radialGradient id="okg" cx="0.4" cy="0.3" r="0.8"><stop offset="0" stop-color="#5cc070"/><stop offset="1" stop-color="#177a2c"/></radialGradient></defs><circle cx="3.6" cy="3.6" r="3.4" fill="url(#okg)"/><path d="M1.6 3.6l1.6 1.7L5.8 2.2" stroke="#fff" stroke-width="1.5" fill="none"/></svg><div class="tx" style="left:111.5px;top:261px">Links</div><svg style="left:100px;top:277px" width="16" height="17"><path d="M4.5 1.5H11L15.5 6V15.5H4.5z" fill="#eef5ff" stroke="#8b6c2c"/><path d="M11 1.5V6H15.5" fill="#f4e4b8" stroke="#8b6c2c" stroke-width="0.8"/><path d="M6.5 4.5h3.5M9.5 8h4.5M9.5 10.5h4.5M9.5 13h4.5" stroke="#4a78c8" stroke-width="1.1"/><path d="M1.5 8Q1.5 6.5 3 6.5H9.5V14.5Q9.5 16.5 7.5 16.5H2Q0.5 16.5 0.5 15.5Q0.5 14.5 1.5 14.5z" fill="#f6f6ee" stroke="#6a5a3a" stroke-width="0.9"/><path d="M3 9.5h4.5M3 12h4.5" stroke="#4a78c8" stroke-width="1.1"/></svg><svg style="left:119px;top:282px" width="8" height="8"><defs><radialGradient id="okg" cx="0.4" cy="0.3" r="0.8"><stop offset="0" stop-color="#5cc070"/><stop offset="1" stop-color="#177a2c"/></radialGradient></defs><circle cx="3.6" cy="3.6" r="3.4" fill="url(#okg)"/><path d="M1.6 3.6l1.6 1.7L5.8 2.2" stroke="#fff" stroke-width="1.5" fill="none"/></svg><div class="a" style="left:127px;top:277px;width:99px;height:15px;background:#d4d4d4"></div><div class="tx" style="left:130.5px;top:277px">Suggested Sites.url</div><svg style="left:100px;top:293px" width="16" height="17"><path d="M4.5 1.5H11L15.5 6V15.5H4.5z" fill="#eef5ff" stroke="#8b6c2c"/><path d="M11 1.5V6H15.5" fill="#f4e4b8" stroke="#8b6c2c" stroke-width="0.8"/><path d="M6.5 4.5h3.5M9.5 8h4.5M9.5 10.5h4.5M9.5 13h4.5" stroke="#4a78c8" stroke-width="1.1"/><path d="M1.5 8Q1.5 6.5 3 6.5H9.5V14.5Q9.5 16.5 7.5 16.5H2Q0.5 16.5 0.5 15.5Q0.5 14.5 1.5 14.5z" fill="#f6f6ee" stroke="#6a5a3a" stroke-width="0.9"/><path d="M3 9.5h4.5M3 12h4.5" stroke="#4a78c8" stroke-width="1.1"/></svg><svg style="left:119px;top:298px" width="8" height="8"><defs><radialGradient id="okg" cx="0.4" cy="0.3" r="0.8"><stop offset="0" stop-color="#5cc070"/><stop offset="1" stop-color="#177a2c"/></radialGradient></defs><circle cx="3.6" cy="3.6" r="3.4" fill="url(#okg)"/><path d="M1.6 3.6l1.6 1.7L5.8 2.2" stroke="#fff" stroke-width="1.5" fill="none"/></svg><div class="tx" style="left:130.5px;top:293px">Web Slice Gallery.url</div><svg style="left:65px;top:313px" width="9" height="9"><defs><linearGradient id="eg" x1="0" y1="0" x2="0" y2="1"><stop offset="0" stop-color="#fff"/><stop offset="0.5" stop-color="#f4f2ea"/><stop offset="1" stop-color="#c4bca0"/></linearGradient></defs><rect x="0.5" y="0.5" width="8" height="8" rx="1" fill="url(#eg)" stroke="#7f9db9"/><path d="M2 4.5h5" stroke="#000"/><path d="M4.5 2v5" stroke="#000"/></svg><svg style="left:81px;top:310px" width="16" height="13"><defs><linearGradient id="fcf" x1="0" y1="0" x2="0" y2="1"><stop offset="0" stop-color="#fff4b8"/><stop offset="1" stop-color="#f0cc50"/></linearGradient></defs><path d="M0.5 1.5h5l1.5 1.5h8v9.5H0.5z" fill="url(#fcf)" stroke="#c0a048"/><path d="M1 4h14" stroke="#fffae0"/></svg><svg style="left:100px;top:314px" width="8" height="8"><defs><radialGradient id="okg" cx="0.4" cy="0.3" r="0.8"><stop offset="0" stop-color="#5cc070"/><stop offset="1" stop-color="#177a2c"/></radialGradient></defs><circle cx="3.6" cy="3.6" r="3.4" fill="url(#okg)"/><path d="M1.6 3.6l1.6 1.7L5.8 2.2" stroke="#fff" stroke-width="1.5" fill="none"/></svg><div class="tx" style="left:111.5px;top:309px">Microsoft Websites</div><svg style="left:81px;top:325px" width="16" height="17"><path d="M4.5 1.5H11L15.5 6V15.5H4.5z" fill="#eef5ff" stroke="#8b6c2c"/><path d="M11 1.5V6H15.5" fill="#f4e4b8" stroke="#8b6c2c" stroke-width="0.8"/><path d="M6.5 4.5h3.5M9.5 8h4.5M9.5 10.5h4.5M9.5 13h4.5" stroke="#4a78c8" stroke-width="1.1"/><path d="M1.5 8Q1.5 6.5 3 6.5H9.5V14.5Q9.5 16.5 7.5 16.5H2Q0.5 16.5 0.5 15.5Q0.5 14.5 1.5 14.5z" fill="#f6f6ee" stroke="#6a5a3a" stroke-width="0.9"/><path d="M3 9.5h4.5M3 12h4.5" stroke="#4a78c8" stroke-width="1.1"/></svg><svg style="left:100px;top:330px" width="8" height="8"><defs><radialGradient id="okg" cx="0.4" cy="0.3" r="0.8"><stop offset="0" stop-color="#5cc070"/><stop offset="1" stop-color="#177a2c"/></radialGradient></defs><circle cx="3.6" cy="3.6" r="3.4" fill="url(#okg)"/><path d="M1.6 3.6l1.6 1.7L5.8 2.2" stroke="#fff" stroke-width="1.5" fill="none"/></svg><div class="tx" style="left:111.5px;top:325px">allan.txt</div><svg style="left:81px;top:341px" width="16" height="17"><path d="M4.5 1.5H11L15.5 6V15.5H4.5z" fill="#eef5ff" stroke="#8b6c2c"/><path d="M11 1.5V6H15.5" fill="#f4e4b8" stroke="#8b6c2c" stroke-width="0.8"/><path d="M6.5 4.5h3.5M9.5 8h4.5M9.5 10.5h4.5M9.5 13h4.5" stroke="#4a78c8" stroke-width="1.1"/><path d="M1.5 8Q1.5 6.5 3 6.5H9.5V14.5Q9.5 16.5 7.5 16.5H2Q0.5 16.5 0.5 15.5Q0.5 14.5 1.5 14.5z" fill="#f6f6ee" stroke="#6a5a3a" stroke-width="0.9"/><path d="M3 9.5h4.5M3 12h4.5" stroke="#4a78c8" stroke-width="1.1"/></svg><svg style="left:100px;top:346px" width="8" height="8"><defs><radialGradient id="okg" cx="0.4" cy="0.3" r="0.8"><stop offset="0" stop-color="#5cc070"/><stop offset="1" stop-color="#177a2c"/></radialGradient></defs><circle cx="3.6" cy="3.6" r="3.4" fill="url(#okg)"/><path d="M1.6 3.6l1.6 1.7L5.8 2.2" stroke="#fff" stroke-width="1.5" fill="none"/></svg><div class="tx" style="left:111.5px;top:341px">aquafold.txt</div><svg style="left:81px;top:357px" width="16" height="17"><path d="M4.5 1.5H11L15.5 6V15.5H4.5z" fill="#eef5ff" stroke="#8b6c2c"/><path d="M11 1.5V6H15.5" fill="#f4e4b8" stroke="#8b6c2c" stroke-width="0.8"/><path d="M6.5 4.5h3.5M9.5 8h4.5M9.5 10.5h4.5M9.5 13h4.5" stroke="#4a78c8" stroke-width="1.1"/><path d="M1.5 8Q1.5 6.5 3 6.5H9.5V14.5Q9.5 16.5 7.5 16.5H2Q0.5 16.5 0.5 15.5Q0.5 14.5 1.5 14.5z" fill="#f6f6ee" stroke="#6a5a3a" stroke-width="0.9"/><path d="M3 9.5h4.5M3 12h4.5" stroke="#4a78c8" stroke-width="1.1"/></svg><svg style="left:100px;top:362px" width="8" height="8"><defs><radialGradient id="okg" cx="0.4" cy="0.3" r="0.8"><stop offset="0" stop-color="#5cc070"/><stop offset="1" stop-color="#177a2c"/></radialGradient></defs><circle cx="3.6" cy="3.6" r="3.4" fill="url(#okg)"/><path d="M1.6 3.6l1.6 1.7L5.8 2.2" stroke="#fff" stroke-width="1.5" fill="none"/></svg><div class="tx" style="left:111.5px;top:357px">chan.txt</div><svg style="left:81px;top:373px" width="16" height="17"><path d="M4.5 1.5H11L15.5 6V15.5H4.5z" fill="#eef5ff" stroke="#8b6c2c"/><path d="M11 1.5V6H15.5" fill="#f4e4b8" stroke="#8b6c2c" stroke-width="0.8"/><path d="M6.5 4.5h3.5M9.5 8h4.5M9.5 10.5h4.5M9.5 13h4.5" stroke="#4a78c8" stroke-width="1.1"/><path d="M1.5 8Q1.5 6.5 3 6.5H9.5V14.5Q9.5 16.5 7.5 16.5H2Q0.5 16.5 0.5 15.5Q0.5 14.5 1.5 14.5z" fill="#f6f6ee" stroke="#6a5a3a" stroke-width="0.9"/><path d="M3 9.5h4.5M3 12h4.5" stroke="#4a78c8" stroke-width="1.1"/></svg><svg style="left:102px;top:377px" width="4" height="10"><path d="M0 0H3V4L1.5 5.5L0 4z" fill="#ff1020"/><path d="M1.5 1V3.5" stroke="#ff9090" stroke-width="0.8"/><path d="M1.5 6.3L3 7.8L1.5 9.3L0 7.8z" fill="#f01020"/></svg><div class="tx" style="left:111.5px;top:373px">jonathantest.sql</div><div class="a" style="left:9px;top:583px;width:246px;height:15px;background:#fefefb"></div><div class="a" style="left:10px;top:584px;width:14px;height:13px;border:1px solid #b4c8f6;border-radius:2px;background:linear-gradient(#d0defa,#bccff6)"></div><svg style="left:13px;top:586px" width="8" height="10"><path d="M6 0.8L1.5 5 6 9.2" stroke="#4d6185" stroke-width="2.4" fill="none"/></svg><div class="a" style="left:240px;top:584px;width:14px;height:13px;border:1px solid #b4c8f6;border-radius:2px;background:linear-gradient(#d0defa,#bccff6)"></div><svg style="left:243px;top:586px" width="8" height="10"><path d="M1.5 0.8L6 5 1.5 9.2" stroke="#4d6185" stroke-width="2.4" fill="none"/></svg><div class="a" style="left:32px;top:584px;width:203px;height:13px;border:1px solid #b4c8f6;border-radius:2px;background:linear-gradient(#c6d6fa,#b8cdf6)"></div><div class="a" style="left:131px;top:588px;width:1px;height:6px;background:#8caaf0;box-shadow:2px 0 0 #8caaf0,4px 0 0 #8caaf0,6px 0 0 #8caaf0"></div><svg style="left:0;top:600px" width="260" height="26">
<defs>
<linearGradient id="tgs" x1="0" y1="0" x2="0" y2="1"><stop offset="0" stop-color="#cfdef8"/><stop offset="1" stop-color="#aac2ee"/></linearGradient>
<linearGradient id="tgf" x1="0" y1="0" x2="0" y2="1"><stop offset="0" stop-color="#f6f9fe"/><stop offset="1" stop-color="#dce7f9"/></linearGradient>
</defs>
<rect x="4" y="-1" width="256" height="27" fill="#b9cff4"/>
<path d="M82 2.5L97 19.5Q99 23 102 23H151Q154 23 154 20V2.5z" fill="url(#tgf)"/>
<path d="M82 2.5L97 19.5Q99 23 102 23H151Q154 23 154 20V2.5" fill="none" stroke="#3d55b5" stroke-width="1"/>
<path d="M10.5 2.5H82.5L96.5 19Q98.5 22.5 95 22.5H31.5z" fill="url(#tgs)" stroke="#3d55b5" stroke-width="1"/>
<path d="M154.5 2.5H228.5V20Q228.5 22.5 226 22.5H157Q154.5 22.5 154.5 20z" fill="url(#tgs)" stroke="#3d55b5" stroke-width="1"/>
</svg><svg style="left:38px;top:605px" width="9" height="15"><rect x="0.5" y="0.5" width="8" height="14" rx="1" fill="#ece8c8" stroke="#6a6a5a"/><rect x="1.5" y="1.5" width="6" height="3" fill="#d8d8d8"/><path d="M1 6h7" stroke="#6a6a5a"/><rect x="6" y="11" width="1" height="1" fill="#444"/></svg><div class="tx" style="left:55px;top:604px">Servers</div><svg style="left:107px;top:604px" width="16" height="16"><path d="M4.5 1.5H13.5Q15.5 1.5 15.5 3.2Q15.5 5 13.5 5H12.5V12.5Q12.5 15 10 15H2Q0.5 15 0.5 13.5Q0.5 12 2 12H3V3.5Q3 1.5 4.5 1.5z" fill="#f6f2dc" stroke="#6a5a3a"/><path d="M12.5 5Q11 5 11 3.2Q11 1.5 12.5 1.5" fill="none" stroke="#6a5a3a" stroke-width="0.8"/><path d="M2 12Q3.5 12 3.5 13.5" fill="none" stroke="#6a5a3a" stroke-width="0.8"/><path d="M5 7.5h5.5M5 9.5h5.5M5 11.5h5.5" stroke="#5070b0" stroke-dasharray="2,1"/></svg><div class="tx" style="left:126px;top:604px">Files</div><svg style="left:163px;top:606px" width="16" height="13"><path d="M0.5 1.5h5l1 1.5h6v2.5" fill="#f0dc90" stroke="#b8a060"/><path d="M0.5 1.5v11h12" fill="none" stroke="#b8a060"/><path d="M0.5 12.5l3-7h12l-3 7z" fill="#a8c8f0" stroke="#5a80c0"/></svg><div class="tx" style="left:182px;top:604px">Projects</div><div class="a" style="left:256px;top:77px;width:7px;height:549px;background:#a9c5f0"></div><div class="a" style="left:256px;top:77px;width:3px;height:549px;background:#c6d8f7"></div><div id="detail" class="a"></div><svg style="left:974px;top:84px" width="14" height="10"><rect x="0.5" y="0.5" width="13" height="9" fill="#f8f2dc" stroke="#a09070"/><rect x="0.5" y="0.5" width="13" height="2" fill="#3a70c8"/><path d="M0 5h14M0 7.5h14M4 3v7M7 3v7M10 3v7" stroke="#c0b090" stroke-width="0.6"/></svg><div class="tx" style="left:974px;top:100px;transform-origin:0 0;transform:translate(15.5px,0) rotate(90deg)">Detail</div><div class="a" style="left:0;top:30px;width:4px;height:619px;background:linear-gradient(90deg,#5d6ad0 0,#5d6ad0 1px,#7880dc 1px,#7880dc 2px,#7890dc 2px,#7890dc 3px,#7a98e0 3px)"></div><div class="a" style="left:992px;top:30px;width:4px;height:619px;background:linear-gradient(90deg,#7088e0 0,#7088e0 1px,#7890e0 1px,#7890e0 2px,#6878d0 2px,#6878d0 3px,#4850b8 3px)"></div><div class="a" style="left:991px;top:77px;width:1px;height:549px;background:#4048a0"></div><div class="a" style="left:0;top:645px;width:996px;height:4px;background:linear-gradient(#6a80dc 0,#6a80dc 1px,#7088dc 1px,#7088dc 2px,#6a70c8 2px,#6a70c8 3px,#4850b8 3px)"></div><div id="status" class="a"></div><div class="tx" style="left:7px;top:628px">C:\allan-cvs / cvstest / Links / Suggested Sites.url</div><div class="a" style="left:656px;top:628px;width:1px;height:16px;background:#aca899;box-shadow:1px 0 0 #fff"></div><div class="a" style="left:838px;top:628px;width:1px;height:16px;background:#aca899;box-shadow:1px 0 0 #fff"></div><div class="a" style="left:841px;top:628px;width:9px;height:16px;background:#d6d2c2"></div><div class="tx" style="left:861px;top:628px">32 : 251 : 3,555 MB</div><div class="a" style="left:972px;top:628px;width:1px;height:16px;background:#aca899;box-shadow:1px 0 0 #fff"></div><svg style="left:976px;top:629px" width="13" height="15"><path d="M5 1.5h3" stroke="#303030" stroke-width="1.2"/><rect x="1" y="2" width="11" height="2.6" rx="0.8" fill="#888" stroke="#303030" stroke-width="1"/><path d="M2.2 5H10.8L10.2 13.5H2.8z" fill="#c8c8c8" stroke="#303030" stroke-width="1.1"/><path d="M4.6 6v6.5M6.5 6v6.5M8.4 6v6.5" stroke="#505050" stroke-width="0.9"/><path d="M3.6 6v6.5" stroke="#f0f0f0" stroke-width="0.7"/></svg><div id="dlg" class="a"><div id="dtitle" class="a"></div><div class="a" style="left:0;top:30px;width:4px;height:519px;background:linear-gradient(90deg,#0a1ec0 0,#0a1ec0 1px,#0040e0 1px,#0040e0 2px,#1464f4 2px,#1464f4 3px,#0a54ea 3px)"></div><div class="a" style="left:663px;top:30px;width:4px;height:519px;background:linear-gradient(90deg,#0a50ee 0,#0a50ee 1px,#0038d0 1px,#0038d0 2px,#0024a8 2px,#0024a8 3px,#00148c 3px)"></div><div class="a" style="left:0;top:545px;width:667px;height:4px;background:linear-gradient(#0a54ea 0,#0a54ea 1px,#0040d0 1px,#0040d0 2px,#0028a8 2px,#0028a8 3px,#001080 3px)"></div><svg style="left:6px;top:8px" width="17" height="18" viewBox="0 0 17 18">
<defs><linearGradient id="dbg" x1="0" y1="0" x2="1" y2="0"><stop offset="0" stop-color="#8cd4f8"/><stop offset="0.5" stop-color="#3ab0f0"/><stop offset="1" stop-color="#2088d8"/></linearGradient>
<radialGradient id="sph" cx="0.35" cy="0.35" r="0.7"><stop offset="0" stop-color="#d0ecff"/><stop offset="1" stop-color="#3a8ad8"/></radialGradient></defs>
<path d="M0.5 2.5v9c0 1.1 2.5 2 5.5 2s5.5-0.9 5.5-2v-9z" fill="url(#dbg)"/>
<path d="M0.5 10v1.5c0 1.1 2.5 2 5.5 2s5.5-0.9 5.5-2V10c0 1.1-2.5 2-5.5 2s-5.5-0.9-5.5-2z" fill="#f4f0ea"/>
<path d="M0.5 2.5v1.8c0 1.1 2.5 2 5.5 2s5.5-0.9 5.5-2V2.5z" fill="#f8f6f0"/>
<ellipse cx="6" cy="2.5" rx="5.5" ry="2" fill="#fbfaf6" stroke="#e0d8d0" stroke-width="0.5"/>
<circle cx="12.8" cy="4.6" r="2.5" fill="url(#sph)"/>
<rect x="6.5" y="7.5" width="9" height="8" fill="#a8daf6" stroke="#d8ccb4" stroke-width="1"/>
<rect x="7" y="8" width="8" height="1.5" fill="#e8f4fc"/>
<path d="M7 11.5h8M7 13.5h8M9.7 9.5v6M12.3 9.5v6" stroke="#e6f6ff" stroke-width="0.8"/>
</svg><div class="a" style="-webkit-text-stroke:0;left:25.5px;top:9.5px;font-size:14px;font-weight:bold;color:#fff;line-height:16px;white-space:nowrap;text-shadow:1px 1px 0 #0a1a80;letter-spacing:-0.6px">CVS History - Suggested Sites.url</div><div class="a" style="left:594px;top:6px;width:21px;height:21px;border:1px solid #fff;border-radius:3px;background:linear-gradient(135deg,#6f9cf8,#2a62ea 50%,#1848d0)"><div class="a" style="left:4px;top:12px;width:7px;height:3px;background:#fff"></div></div><div class="a" style="left:617px;top:6px;width:21px;height:21px;border:1px solid #fff;border-radius:3px;background:linear-gradient(135deg,#6f9cf8,#2a62ea 50%,#1848d0)"><div class="a" style="left:4px;top:4px;width:12px;height:12px;border:1px solid #fff;border-top-width:3px"></div></div><div class="a" style="left:640px;top:6px;width:21px;height:21px;border:1px solid #fff;border-radius:3px;background:linear-gradient(135deg,#f0907a,#e0552e 50%,#c8401c)"><svg style="left:0;top:0" width="19" height="19"><path d="M4.5 4.5L15 15M15 4.5L4.5 15" stroke="#fff" stroke-width="2"/></svg></div><div id="dclient" class="a"><div class="grp" style="left:12px;top:17px;width:635px;height:313px"></div><div class="glab" style="left:20px;top:11px">History</div><div class="a" style="left:480px;top:32px;width:161px;height:18px;background:#fff;border:1px solid #7f9db9"></div><svg style="left:481px;top:33px" width="22" height="16"><circle cx="7.5" cy="7" r="4.3" fill="none" stroke="#9a9a9a" stroke-width="1.9"/><path d="M10.5 10.2L13 12.7" stroke="#9a9a9a" stroke-width="2.3" stroke-linecap="round"/><path d="M14.5 6.5h5l-2.5 2.6z" fill="#9a9a9a"/></svg><div class="a" style="left:18px;top:55px;width:623px;height:269px;background:#fff;border:1px solid #7f9db9"></div><div class="a" style="left:19px;top:56px;width:50px;height:267px;background:#ece9d8"></div><div class="a" style="left:19px;top:56px;width:621px;height:20px;background:linear-gradient(#ece9d8 0,#ece9d8 17px,#dfdbca 17px,#dfdbca 18px,#d3cfbd 18px,#d3cfbd 19px,#c8c4b2 19px)"></div><div class="a" style="left:67px;top:59px;width:1px;height:13px;background:#c7c5b2;box-shadow:1px 0 0 #fff"></div><div class="a" style="left:133px;top:59px;width:1px;height:13px;background:#c7c5b2;box-shadow:1px 0 0 #fff"></div><div class="a" style="left:283px;top:59px;width:1px;height:13px;background:#c7c5b2;box-shadow:1px 0 0 #fff"></div><div class="a" style="left:350px;top:59px;width:1px;height:13px;background:#c7c5b2;box-shadow:1px 0 0 #fff"></div><div class="a" style="left:417px;top:59px;width:1px;height:13px;background:#c7c5b2;box-shadow:1px 0 0 #fff"></div><div class="a" style="left:637px;top:59px;width:1px;height:13px;background:#c7c5b2;box-shadow:1px 0 0 #fff"></div><div class="tx" style="left:77px;top:58px">Revision</div><div class="tx" style="left:143px;top:58px">Date</div><div class="tx" style="left:293px;top:58px">Author</div><div class="tx" style="left:360px;top:58px">Changes</div><div class="tx" style="left:427px;top:58px">Comment</div><div class="a" style="left:19px;top:76px;width:49px;height:16px;background:linear-gradient(#ece9d8 0,#ece9d8 13px,#dcd8c6 13px,#dcd8c6 14px,#ccc8b6 14px,#ccc8b6 15px,#c0bcaa 15px);border-right:1px solid #c4c0ae"></div><div class="tx" style="left:19px;top:76px;width:48px;text-align:center">1</div><div class="a" style="left:68px;top:76px;width:571px;height:1px;background:#ece9d8"></div><div class="a" style="left:69px;top:77px;width:570px;height:15px;background:#316ac5"></div><div class="a" style="left:135px;top:76px;width:1px;height:16px;background:#ece9d8"></div><div class="a" style="left:285px;top:76px;width:1px;height:16px;background:#ece9d8"></div><div class="a" style="left:352px;top:76px;width:1px;height:16px;background:#ece9d8"></div><div class="a" style="left:419px;top:76px;width:1px;height:16px;background:#ece9d8"></div><div class="a" style="left:419px;top:77px;width:220px;height:15px;border:1px dotted #e8b040"></div><div class="tx" style="left:70px;top:76px;color:#fff">1.1</div><div class="tx" style="left:136px;top:76px;color:#fff">7/9/2010 10:44:50 AM</div><div class="tx" style="left:286px;top:76px;color:#fff">allan</div><div class="tx" style="left:353px;top:76px;color:#fff"></div><div class="tx" style="left:420px;top:76px;color:#fff">Initial revision</div><div class="a" style="left:19px;top:92px;width:49px;height:16px;background:linear-gradient(#ece9d8 0,#ece9d8 13px,#dcd8c6 13px,#dcd8c6 14px,#ccc8b6 14px,#ccc8b6 15px,#c0bcaa 15px);border-right:1px solid #c4c0ae"></div><div class="tx" style="left:19px;top:92px;width:48px;text-align:center">2</div><div class="a" style="left:68px;top:92px;width:571px;height:1px;background:#ece9d8"></div><div class="a" style="left:135px;top:92px;width:1px;height:16px;background:#ece9d8"></div><div class="a" style="left:285px;top:92px;width:1px;height:16px;background:#ece9d8"></div><div class="a" style="left:352px;top:92px;width:1px;height:16px;background:#ece9d8"></div><div class="a" style="left:419px;top:92px;width:1px;height:16px;background:#ece9d8"></div><div class="tx" style="left:70px;top:92px;color:#000">1.1.1.1</div><div class="tx" style="left:136px;top:92px;color:#000">7/9/2010 10:44:50 AM</div><div class="tx" style="left:286px;top:92px;color:#000">allan</div><div class="tx" style="left:353px;top:92px;color:#000">+0 -0</div><div class="tx" style="left:420px;top:92px;color:#000">test</div><div class="a" style="left:68px;top:108px;width:571px;height:1px;background:#ece9d8"></div><div class="dots" style="left:322px;top:337px"></div><div class="dots" style="left:326px;top:337px"></div><div class="dots" style="left:330px;top:337px"></div><div class="dots" style="left:334px;top:337px"></div><div class="grp" style="left:12px;top:352px;width:635px;height:123px"></div><div class="glab" style="left:20px;top:346px">Comments</div><div class="a" style="left:18px;top:367px;width:623px;height:102px;background:#fff;border:1px solid #7f9db9"></div><div class="tx" style="left:22px;top:371px">Initial revision</div><div class="a" style="left:575px;top:483px;width:73px;height:21px;border:1px solid #003c74;border-radius:3px;background:linear-gradient(#fff,#f4f4f0 60%,#e6e4dc);box-shadow:inset 0 0 0 1px #a8c8f8,inset 0 -2px 0 #5a8ee8,inset 0 2px 0 #cce0fc"></div><div class="tx" style="left:575px;top:485px;width:73px;text-align:center">Close</div></div></div></div></body></html>
